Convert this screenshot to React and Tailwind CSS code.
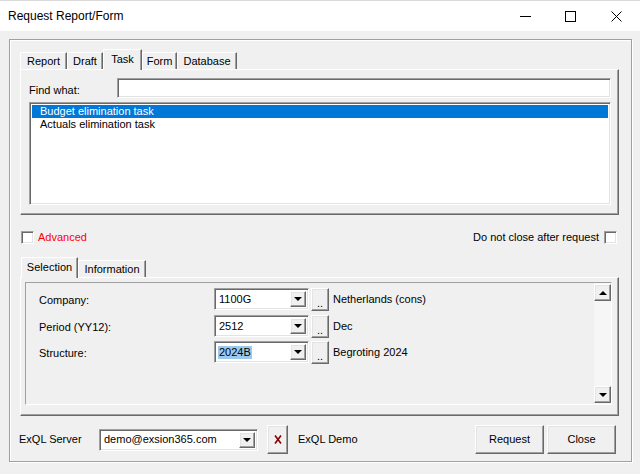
import React from 'react';

const sunken =
  'bg-white border border-t-[#a0a0a0] border-l-[#a0a0a0] border-r-white border-b-white shadow-[inset_1px_1px_0_#696969,inset_-1px_-1px_0_#e3e3e3]';
const raised =
  'bg-[#f0f0f0] border border-t-white border-l-white border-r-[#696969] border-b-[#696969] shadow-[inset_-1px_-1px_0_#a0a0a0,inset_1px_1px_0_#e3e3e3]';

const Arrow = ({ up }) => (
  <div
    className={
      up
        ? 'w-0 h-0 border-x-[4px] border-x-transparent border-b-[4px] border-b-black'
        : 'w-0 h-0 border-x-[4px] border-x-transparent border-t-[4px] border-t-black'
    }
  />
);

const Tab = ({ label, active, w }) => (
  <div
    style={{ width: w }}
    className={
      active
        ? 'relative z-10 h-[21px] -mb-px bg-[#f0f0f0] border-l border-t border-l-white border-t-white border-r border-r-[#696969] shadow-[inset_-1px_0_0_#a0a0a0] flex justify-center pt-[3px] leading-[13px]'
        : 'h-[17px] bg-[#f0f0f0] border-l border-t border-l-white border-t-white border-r border-r-[#696969] shadow-[inset_-1px_0_0_#a0a0a0] flex justify-center pt-[2px] leading-[13px]'
    }
  >
    {label}
  </div>
);

const Combo = ({ value, w, h = 22, highlight }) => (
  <div style={{ width: w, height: h }} className={`${sunken} flex items-center p-[2px]`}>
    <span className={highlight ? 'ml-[1px] bg-[#99c9ef] px-px leading-[13px]' : 'ml-[2px] leading-[13px]'}>{value}</span>
    <div className={`${raised} ml-auto w-[16px] h-full flex items-center justify-center`}>
      <Arrow />
    </div>
  </div>
);

const Field = ({ label, value, desc, highlight, mt }) => (
  <div className={`flex items-center h-[22px] ${mt}`}>
    <div className="w-[188px] pl-[13px] pt-[2px]">{label}</div>
    <Combo value={value} w={95} highlight={highlight} />
    <div className={`${raised} ml-[2px] w-[18px] h-[23px] flex items-end justify-center pb-[3px] leading-[8px]`}>..</div>
    <div className="ml-[4px] pt-[1px]">{desc}</div>
  </div>
);

export default function App() {
  return (
    <div
      className="w-[640px] h-[474px] bg-[#f0f0f0] text-[11px] text-black overflow-hidden"
      style={{ fontFamily: '"Liberation Sans", Arial, sans-serif' }}
    >
      {/* title bar */}
      <div className="h-[31px] bg-white flex items-center border-t border-t-[#d9d9d9]">
        <div className="pl-[8px] text-[12px]">Request Report/Form</div>
        <div className="ml-auto flex h-full">
          <div className="w-[45px] flex items-center justify-center">
            <svg width="11" height="11" viewBox="0 0 11 11"><path d="M0 5.5h11" stroke="#000" strokeWidth="1" /></svg>
          </div>
          <div className="w-[45px] flex items-center justify-center">
            <svg width="11" height="11" viewBox="0 0 11 11"><rect x="0.5" y="0.5" width="10" height="10" fill="none" stroke="#000" strokeWidth="1" /></svg>
          </div>
          <div className="w-[47px] flex items-center justify-center">
            <svg width="11" height="11" viewBox="0 0 11 11"><path d="M0.5 0.5L10.5 10.5M10.5 0.5L0.5 10.5" stroke="#000" strokeWidth="1" /></svg>
          </div>
        </div>
      </div>

      {/* frame */}
      <div className="ml-[9px] mt-[8px] w-[623px] h-[423px] border border-[#a0a0a0] shadow-[inset_1px_1px_0_white,1px_1px_0_white] flex flex-col">
        {/* top tabs */}
        <div className="ml-[10px] mt-[9px] h-[20px] flex items-end">
          <Tab label="Report" w={47} />
          <Tab label="Draft" w={36} />
          <Tab label="Task" w={39} active />
          <Tab label="Form" w={35} />
          <Tab label="Database" w={60} />
        </div>
        <div className="ml-[10px] w-[599px] h-[146px] border border-l-white border-t-white border-r-[#696969] border-b-[#696969] shadow-[inset_-1px_-1px_0_#a0a0a0] flex flex-col">
          <div className="mt-[8px] h-[20px] flex items-center">
            <div className="w-[96px] pl-[8px] pt-[5px]">Find what:</div>
            <div className={`${sunken} w-[494px] h-[20px]`} />
          </div>
          <div className={`${sunken} mt-[4px] ml-[8px] w-[582px] h-[103px] p-[2px] leading-[13px]`}>
            <div className="h-[13px] bg-[#0078d7] text-white pl-[8px]">Budget elimination task</div>
            <div className="h-[13px] pl-[8px]">Actuals elimination task</div>
          </div>
        </div>

        {/* options */}
        <div className="mt-[16px] h-[13px] flex items-center pr-[14px]">
          <div className={`${sunken} ml-[11px] w-[13px] h-[13px]`} />
          <div className="ml-[4px] text-[#ff0000]">Advanced</div>
          <div className="ml-auto">Do not close after request</div>
          <div className={`${sunken} ml-[5px] w-[13px] h-[13px]`} />
        </div>

        {/* selection tabs */}
        <div className="ml-[11px] mt-[13px] h-[20px] flex items-end">
          <Tab label="Selection" w={57} active />
          <Tab label="Information" w={68} />
        </div>
        <div className="ml-[10px] w-[599px] h-[139px] border border-l-white border-t-white border-r-[#696969] border-b-[#696969] shadow-[inset_-1px_-1px_0_#a0a0a0]">
          <div className="ml-[4px] mt-[4px] w-[587px] h-[123px] border border-t-[#a0a0a0] border-l-[#a0a0a0] border-r-white border-b-white flex">
            <div className="flex-1 flex flex-col">
              <Field label="Company:" value="1100G" desc="Netherlands (cons)" mt="mt-[5px]" />
              <Field label="Period (YY12):" value="2512" desc="Dec" mt="mt-[5px]" />
              <Field label="Structure:" value="2024B" desc="Begroting 2024" mt="mt-[4px]" highlight />
            </div>
            <div className="w-[17px] h-full flex flex-col justify-between bg-[#f6f6f6] py-[1px]">
              <div className={`${raised} w-[17px] h-[17px] flex items-center justify-center`}>
                <Arrow up />
              </div>
              <div className={`${raised} w-[17px] h-[17px] flex items-center justify-center`}>
                <Arrow />
              </div>
            </div>
          </div>
        </div>

        {/* bottom row */}
        <div className="mt-[9px] h-[29px] flex items-center pr-[15px]">
          <div className="ml-[9px] w-[80px]">ExQL Server</div>
          <Combo value="demo@exsion365.com" w={159} h={22} />
          <div className={`${raised} ml-[9px] w-[21px] h-[29px] flex items-center justify-center`}>
            <svg width="10" height="11" viewBox="0 0 10 11">
              <path d="M2 1.5L8 9.5M8 1.5L2 9.5" stroke="#8b0000" strokeWidth="1.6" />
            </svg>
          </div>
          <div className="ml-[10px]">ExQL Demo</div>
          <div className={`${raised} ml-auto w-[69px] h-[29px] flex items-center justify-center`}>Request</div>
          <div className={`${raised} ml-[3px] w-[69px] h-[29px] flex items-center justify-center`}>Close</div>
        </div>
      </div>
    </div>
  );
}
